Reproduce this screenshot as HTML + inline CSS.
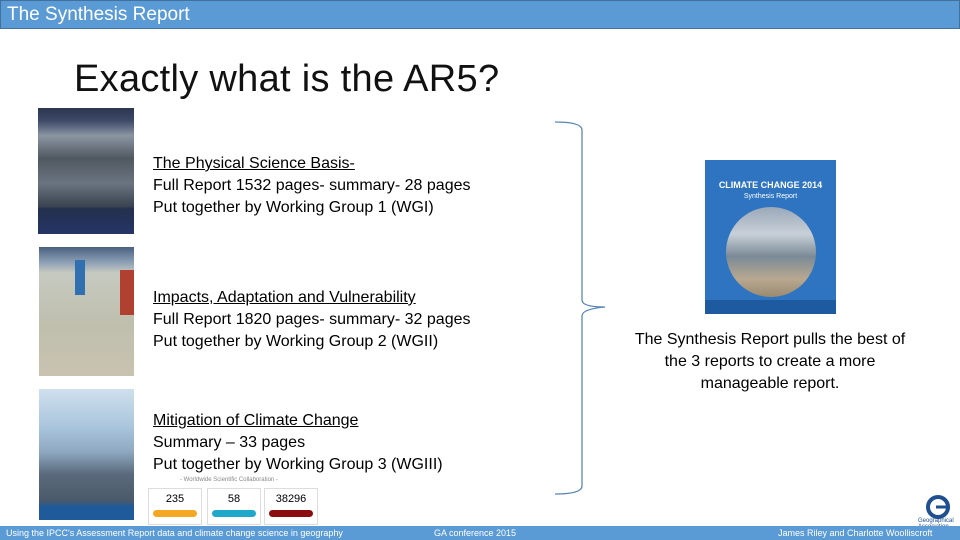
<!DOCTYPE html>
<html><head><meta charset="utf-8"><style>
body{margin:0;width:960px;height:540px;position:relative;overflow:hidden;background:#fff;font-family:"Liberation Sans",sans-serif;}
.hdr{position:absolute;left:0;top:0;background:#5b9bd5;border:1px solid #41719c;color:#fff;font-size:19px;line-height:27px;padding-left:6px;box-sizing:border-box;width:960px;height:29px;}
.title{position:absolute;left:74px;top:58px;font-size:38px;color:#111;letter-spacing:0.3px;font-weight:300;}
.txt{position:absolute;left:153px;font-size:16px;line-height:22px;color:#000;}
.cov{position:absolute;}
.ftr{position:absolute;left:0;top:526px;width:960px;height:14px;background:#5b9bd5;color:#fff;font-size:9px;line-height:14px;}
.ftr span{position:absolute;top:0;}
.right{position:absolute;left:620px;top:329px;width:300px;text-align:center;font-size:16px;line-height:22px;}
.box{position:absolute;top:488px;width:52px;height:35px;border:1px solid #ddd;text-align:center;font-size:11px;}
.box b{display:block;font-weight:normal;margin-top:4px;}
.box i{display:block;margin:5px auto 0;width:44px;height:7px;border-radius:4px;}
</style></head><body>
<div class="hdr">The Synthesis Report</div>
<div class="title">Exactly what is the AR5?</div>

<div class="cov" style="left:38px;top:108px;width:96px;height:126px;background:linear-gradient(180deg,#2b3550 0,#3d4a68 10%,#8b95a3 22%,#505860 40%,#6a7480 60%,#3a4450 78%,#24304e 80%,#253565 100%);"></div>
<div class="cov" style="left:39px;top:247px;width:95px;height:129px;background:linear-gradient(180deg,#4a6080 0,#8ca0b5 12%,#c6c9c0 20%,#bfbfae 60%,#c9c2b0 100%);"></div>
<div class="cov" style="left:120px;top:270px;width:14px;height:45px;background:#b04030;"></div>
<div class="cov" style="left:75px;top:260px;width:10px;height:35px;background:#3070b0;"></div>
<div class="cov" style="left:39px;top:389px;width:95px;height:131px;background:linear-gradient(180deg,#cfe0ec 0,#a8c4dc 30%,#8ea8c0 48%,#5a6a7c 65%,#4b5a6a 85%,#1f5a9a 90%,#1f5a9a 100%);"></div>

<div class="txt" style="top:153px"><u>The Physical Science Basis-</u><br>Full Report 1532 pages- summary- 28 pages<br>Put together by Working Group 1 (WGI)</div>
<div class="txt" style="top:287px"><u>Impacts, Adaptation and Vulnerability</u><br>Full Report 1820 pages- summary- 32 pages<br>Put together by Working Group 2 (WGII)</div>
<div class="txt" style="top:410px"><u>Mitigation of Climate Change</u><br>Summary – 33 pages<br>Put together by Working Group 3 (WGIII)</div>

<div style="position:absolute;left:180px;top:477px;font-size:6px;color:#888;">- Worldwide Scientific Collaboration -</div>
<div class="box" style="left:148px"><b>235</b><i style="background:#f5a623"></i></div>
<div class="box" style="left:207px"><b>58</b><i style="background:#1fa8c9"></i></div>
<div class="box" style="left:264px"><b>38296</b><i style="background:#8b0d0d"></i></div>

<svg style="position:absolute;left:0;top:0" width="960" height="540">
<path d="M555 122 Q582 122 582 130 L582 300 Q582 307 605 307 Q582 309 582 316 L582 486 Q582 494 555 494" fill="none" stroke="#5b87b5" stroke-width="1.3"/>
<circle cx="938" cy="507" r="10" fill="none" stroke="#1f4f8f" stroke-width="4"/>
<path d="M936 507 L950 507" stroke="#1f4f8f" stroke-width="3"/>
</svg>
<div style="position:absolute;left:918px;top:518px;font-size:6px;color:#1f4f8f;line-height:6px;">Geographical<br>Association</div>

<div class="cov" style="left:705px;top:160px;width:131px;height:154px;background:#2e74c0;"></div>
<div style="position:absolute;left:705px;top:180px;width:131px;text-align:center;color:#fff;font-size:9px;font-weight:bold;">CLIMATE CHANGE 2014</div>
<div style="position:absolute;left:705px;top:193px;width:131px;text-align:center;color:#fff;font-size:7px;">Synthesis Report</div>
<div style="position:absolute;left:726px;top:207px;width:90px;height:90px;border-radius:50%;background:linear-gradient(180deg,#9aa8b8 0,#c8d0d8 30%,#7a8a96 55%,#b8a890 80%,#9a8a70 100%);"></div>
<div class="cov" style="left:705px;top:300px;width:131px;height:14px;background:#1d5aa0;"></div>

<div class="right">The Synthesis Report pulls the best of<br>the 3 reports to create a more<br>manageable report.</div>

<div class="ftr"><span style="left:6px">Using the IPCC's Assessment Report data and climate change science in geography</span><span style="left:434px">GA conference 2015</span><span style="left:778px">James Riley and Charlotte Woolliscroft</span></div>
</body></html>
